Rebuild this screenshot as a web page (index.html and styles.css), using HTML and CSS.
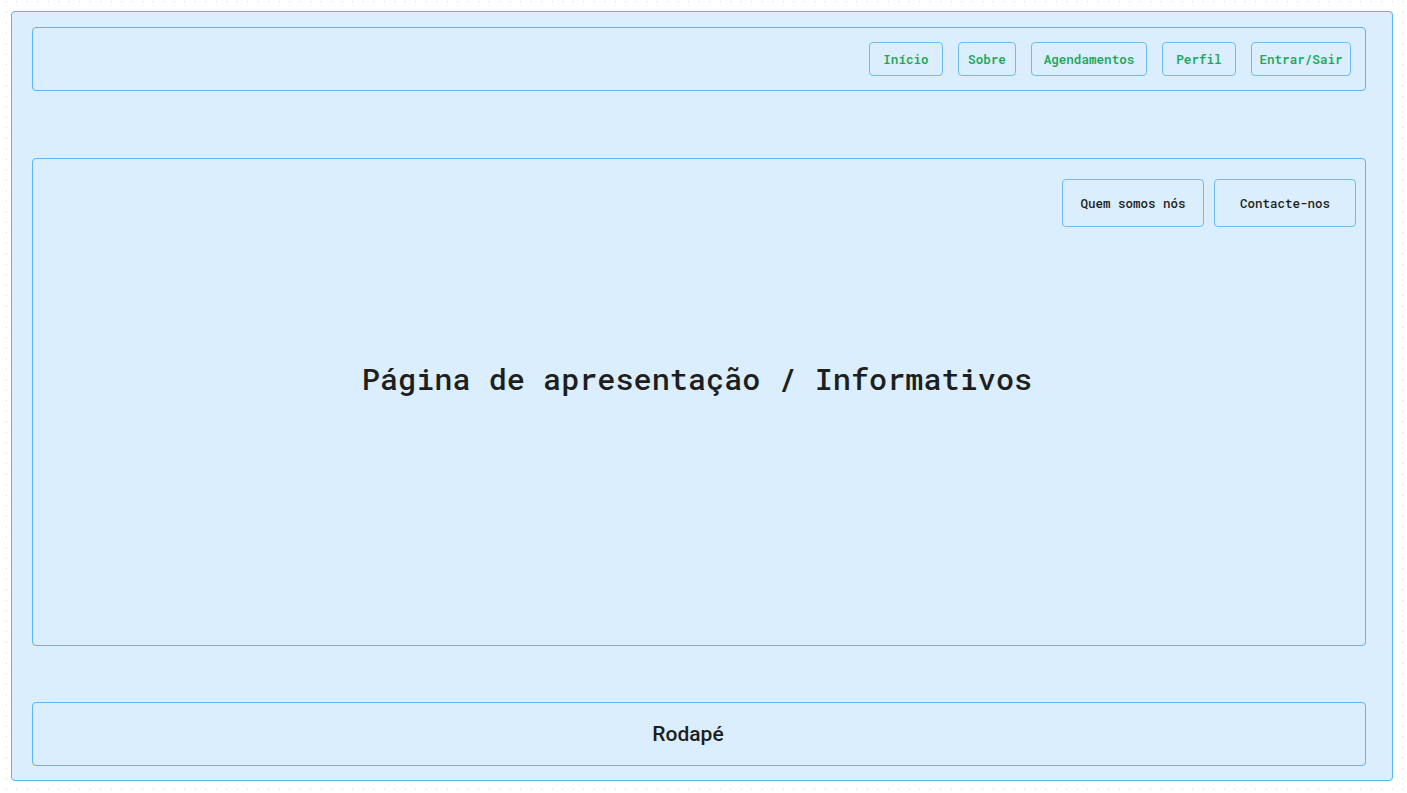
FILE: index.html
```html
<!DOCTYPE html>
<html lang="pt">
<head>
<meta charset="utf-8">
<title>Wireframe</title>
<link rel="stylesheet" href="styles.css">
</head>
<body>
<div class="frame">
  <header class="box header">
    <nav class="nav">
      <a class="nav-btn w-inicio">Início</a>
      <a class="nav-btn w-sobre">Sobre</a>
      <a class="nav-btn w-agend">Agendamentos</a>
      <a class="nav-btn w-perfil">Perfil</a>
      <a class="nav-btn w-entrar">Entrar/Sair</a>
    </nav>
  </header>
  <main class="box main">
    <div class="actions">
      <a class="act-btn">Quem somos nós</a>
      <a class="act-btn">Contacte-nos</a>
    </div>
    <h1 class="title">Página de apresentação / Informativos</h1>
  </main>
  <footer class="box footer">Rodapé</footer>
</div>
</body>
</html>
```
FILE: styles.css
```css
* { box-sizing: border-box; }
html, body { margin: 0; padding: 0; }
body {
  width: 1407px;
  height: 793px;
  overflow: hidden;
  background-color: #ffffff;
  background-image: radial-gradient(circle, #c9c9c9 0.6px, transparent 0.9px);
  background-size: 10.5px 10.5px;
  background-position: 1px -3.5px;
  font-family: "Roboto Mono", "DejaVu Sans Mono", monospace;
  color: #1e1e1e;
}
.frame {
  margin: 11px 0 0 11px;
  width: 1382px;
  height: 770px;
  background: #daeefd;
  border: 1px solid #5db4f6;
  border-radius: 4px;
  padding: 15px 0 0 20px;
  display: flex;
  flex-direction: column;
}
.box {
  width: 1334px;
  background: #daeefd;
  border: 1px solid #5db4f6;
  border-radius: 4px;
}
.header {
  height: 64px;
  display: flex;
  justify-content: flex-end;
  align-items: center;
  padding: 0 14px 0 0;
}
.nav { display: flex; gap: 15px; }
.nav-btn {
  height: 34px;
  display: flex;
  align-items: center;
  justify-content: center;
  border: 1px solid #6cbcf6;
  border-radius: 4px;
  font-size: 12.6px;
  font-weight: 600;
  color: #1ea85c;
}
.w-inicio { width: 74px; }
.w-sobre { width: 58px; }
.w-agend { width: 116px; }
.w-perfil { width: 74px; }
.w-entrar { width: 100px; }
.main {
  margin-top: 67px;
  height: 488px;
  display: flex;
  flex-direction: column;
  padding: 20px 9px 0 0;
}
.actions { display: flex; justify-content: flex-end; gap: 10px; }
.act-btn {
  width: 142px;
  height: 48px;
  display: flex;
  align-items: center;
  justify-content: center;
  border: 1px solid #6cbcf6;
  border-radius: 4px;
  font-size: 12.5px;
  font-weight: 500;
  color: #1e1e1e;
}
.title {
  margin: 131px 0 0 5px;
  text-align: center;
  font-size: 30.2px;
  line-height: 40px;
  font-weight: 500;
  color: #1e1e1e;
  letter-spacing: 0;
}
.footer {
  margin-top: 56px;
  height: 64px;
  display: flex;
  align-items: center;
  justify-content: center;
  padding-right: 22px;
  font-family: "Roboto", "Liberation Sans", sans-serif;
  font-size: 21px;
  font-weight: 500;
  color: #1e1e1e;
}
```
